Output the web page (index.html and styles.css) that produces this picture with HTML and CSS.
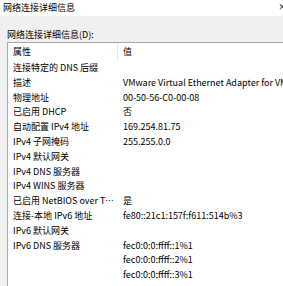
FILE: index.html
```html
<!DOCTYPE html>
<html lang="zh-CN">
<head>
    <meta charset="UTF-8">
    <title>网络连接详细信息</title>
    <link rel="stylesheet" href="styles.css">
</head>
<body>
    <div class="titlebar">
        <span class="title">网络连接详细信息</span>
        <span class="close">✕</span>
    </div>

    <div class="content">
        <div class="label">网络连接详细信息(D):</div>
        <div class="listbox">
            <div class="row head">
                <div class="cell name">属性</div>
                <div class="cell value">值</div>
            </div>
            <div class="row"><div class="cell name">连接特定的 DNS 后缀</div><div class="cell value"></div></div>
            <div class="row"><div class="cell name">描述</div><div class="cell value">VMware Virtual Ethernet Adapter for VMnet8</div></div>
            <div class="row"><div class="cell name">物理地址</div><div class="cell value">00-50-56-C0-00-08</div></div>
            <div class="row"><div class="cell name">已启用 DHCP</div><div class="cell value">否</div></div>
            <div class="row"><div class="cell name">自动配置 IPv4 地址</div><div class="cell value">169.254.81.75</div></div>
            <div class="row"><div class="cell name">IPv4 子网掩码</div><div class="cell value">255.255.0.0</div></div>
            <div class="row"><div class="cell name">IPv4 默认网关</div><div class="cell value"></div></div>
            <div class="row"><div class="cell name">IPv4 DNS 服务器</div><div class="cell value"></div></div>
            <div class="row"><div class="cell name">IPv4 WINS 服务器</div><div class="cell value"></div></div>
            <div class="row"><div class="cell name">已启用 NetBIOS over Tcpip</div><div class="cell value">是</div></div>
            <div class="row"><div class="cell name">连接-本地 IPv6 地址</div><div class="cell value">fe80::21c1:157f:f611:514b%3</div></div>
            <div class="row"><div class="cell name">IPv6 默认网关</div><div class="cell value"></div></div>
            <div class="row"><div class="cell name">IPv6 DNS 服务器</div><div class="cell value">fec0:0:0:ffff::1%1</div></div>
            <div class="row"><div class="cell name"></div><div class="cell value">fec0:0:0:ffff::2%1</div></div>
            <div class="row"><div class="cell name"></div><div class="cell value">fec0:0:0:ffff::3%1</div></div>
        </div>
    </div>
</body>
</html>
```

FILE: styles.css
```css
* {
    margin: 0;
    padding: 0;
    box-sizing: border-box;
}

html, body {
    width: 283px;
    height: 286px;
    overflow: hidden;
}

body {
    font-family: "Noto Sans CJK SC", "Noto Sans", sans-serif;
    font-size: 9px;
    color: #000;
    background-color: #f0f0f0;
    display: flex;
    flex-direction: column;
}

.titlebar {
    display: flex;
    justify-content: space-between;
    align-items: center;
    height: 16px;
    flex-shrink: 0;
    background-color: #fff;
    padding-left: 3px;
    padding-bottom: 2px;
    white-space: nowrap;
}

.titlebar .close {
    font-family: "DejaVu Sans", sans-serif;
    font-size: 9px;
    color: #333;
    margin-right: -3px;
}

.content {
    flex: 1;
    min-height: 0;
    display: flex;
    flex-direction: column;
    padding: 12px 0 0 7px;
}

.label {
    height: 14px;
    line-height: 14px;
    white-space: nowrap;
}

.listbox {
    flex: 1;
    min-height: 0;
    background-color: #fff;
    border-top: 1px solid #a8a8a8;
    border-left: 1px solid #a8a8a8;
    overflow: hidden;
}

.row {
    display: flex;
    height: 14.8px;
    line-height: 14.8px;
    white-space: nowrap;
}

.row.head {
    height: 18px;
    line-height: 18px;
}

.cell {
    overflow: hidden;
    white-space: nowrap;
}

.cell.name {
    flex-shrink: 0;
    width: 110px;
    padding-left: 5px;
    padding-right: 0;
    text-overflow: ellipsis;
}

.cell.value {
    flex-shrink: 0;
    padding-left: 5px;
    overflow: visible;
}

.head .cell.name {
    border-right: 1px solid #e5e5e5;
}
```
